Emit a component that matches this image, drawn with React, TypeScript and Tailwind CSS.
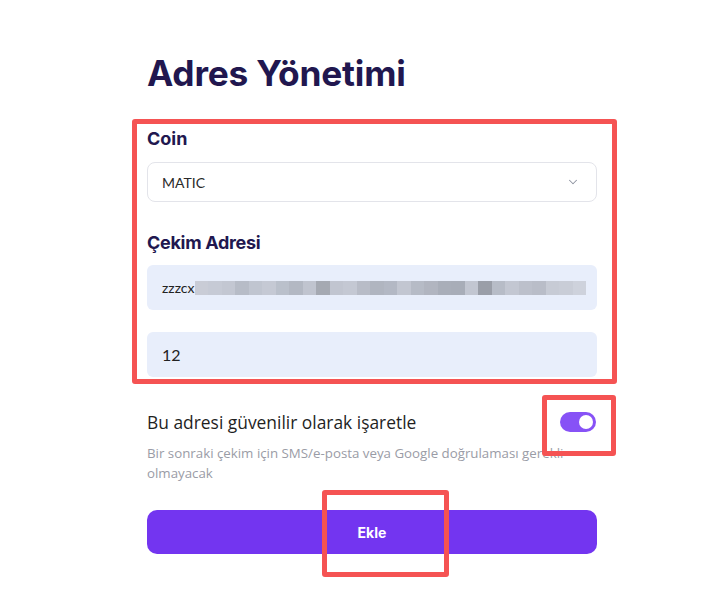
import { ChevronDown } from "lucide-react";

const blurColors = [
  "#c9ccd6", "#c6cad5", "#c3c7d2", "#b7bcc7", "#c0c5d0", "#c5c9d4", "#bac0cb", "#b3b8c3",
  "#c0c4cf", "#a5a9b2", "#c1c5d0", "#c4c8d3", "#b8bcc7", "#b0b5c0", "#b3b8c4", "#c2c6d1",
  "#b6bbc6", "#b1b5c0", "#a9aeb9", "#a8adb8", "#c2c6d1", "#9a9ea8", "#b7bcc7", "#c3c7d2",
  "#bcc0cb", "#b9bdc8", "#c7cbd5", "#c9cdd7", "#ced2dc",
];

const App = () => {
  return (
    <div className="relative w-[708px] h-[600px] bg-white overflow-hidden font-['Lato',sans-serif]">
      <div className="ml-[147px] w-[450px] pt-[52px]">
        <h1 className="text-[35.3px] leading-[44px] font-bold text-[#21174f] font-['Inter',sans-serif] tracking-[-0.2px]">
          Adres Yönetimi
        </h1>

        <label className="block mt-[31px] text-[18px] leading-6 font-bold text-[#21174f] font-['Inter',sans-serif]">
          Coin
        </label>
        <div className="mt-[11px] h-10 rounded-lg border border-[#e3e4ea] flex items-center justify-between pl-[14px] pr-[16px] text-[14px] text-[#2a2a2a]">
          <span>MATIC</span>
          <ChevronDown className="w-3.5 h-3.5 text-[#8d93a0]" strokeWidth={1.75} />
        </div>

        <label className="block mt-[29px] text-[18px] leading-6 font-bold text-[#21174f] font-['Inter',sans-serif] tracking-[-0.3px]">
          Çekim Adresi
        </label>
        <div className="mt-[10px] h-[45px] rounded-md bg-[#e8eefb] flex items-center pl-[15px] text-[14px] text-[#222]">
          <span>zzzcx</span>
          <div className="flex h-[14px]">
            {blurColors.map((c, i) => (
              <div key={i} className="w-[13.5px] h-full" style={{ backgroundColor: c }} />
            ))}
          </div>
        </div>
        <div className="mt-[22px] h-[45px] rounded-md bg-[#e8eefb] flex items-center pl-[15px] text-[16px] text-[#222]">
          12
        </div>

        <div className="mt-[33px] flex items-center justify-between">
          <span className="text-[17.4px] leading-6 text-[#1f1f1f] font-['Open_Sans',sans-serif]">
            Bu adresi güvenilir olarak işaretle
          </span>
          <div className="w-9 h-5 rounded-full bg-[#8752f6] flex items-center justify-end pr-[3px] -translate-x-[1px]">
            <div className="w-[14px] h-[14px] rounded-full bg-white" />
          </div>
        </div>
        <p className="mt-[9px] text-[13.3px] leading-5 text-[#9a9ca6] font-['Open_Sans',sans-serif]">
          Bir sonraki çekim için SMS/e-posta veya Google doğrulaması gerekli olmayacak
        </p>

        <button className="mt-[27px] w-full h-11 rounded-[10px] bg-[#7335f0] text-white text-[14px] font-bold font-['Inter',sans-serif]">
          Ekle
        </button>
      </div>

      {/* annotation boxes */}
      <div className="absolute left-[132px] top-[119px] w-[485px] h-[265px] border-[5px] border-[#f55353] rounded-[3px]" />
      <div className="absolute left-[542px] top-[395px] w-[74px] h-[61px] border-[5px] border-[#f55353] rounded-[3px]" />
      <div className="absolute left-[322px] top-[490px] w-[127px] h-[87px] border-[5px] border-[#f55353] rounded-[3px]" />
    </div>
  );
};

export default App;
